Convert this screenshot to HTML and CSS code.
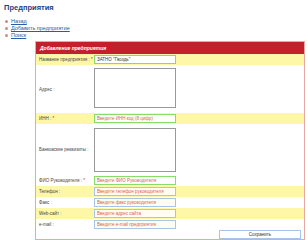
FILE: index.html
```html
<!DOCTYPE html>
<html lang="ru">
<head>
  <meta charset="UTF-8" />
  <title>Предприятия</title>
  <link rel="stylesheet" href="styles.css">
</head>
<body>

  <h1>Предприятия</h1>
  <ul class="menu">
    <li><a href="#">Назад</a></li>
    <li><a href="#">Добавить предприятие</a></li>
    <li><a href="#">Поиск</a></li>
  </ul>

  <div class="box">
    <div class="box-head">Добавление предприятия</div>
    <form>
      <table class="form">
        <tr class="hl">
          <td class="lbl">Название предприятия : <span class="req">*</span></td>
          <td><input type="text" class="ok" value="ЗАТНО &quot;Гвоздь&quot;" /></td>
        </tr>
        <tr>
          <td class="lbl">Адрес :</td>
          <td><textarea></textarea></td>
        </tr>
        <tr class="hl">
          <td class="lbl">ИНН : <span class="req">*</span></td>
          <td><input type="text" class="ok" placeholder="Введите ИНН код (8 цифр)" /></td>
        </tr>
        <tr>
          <td class="lbl">Банковские реквизиты :</td>
          <td><textarea class="tall"></textarea></td>
        </tr>
        <tr>
          <td class="lbl">ФИО Руководителя : <span class="req">*</span></td>
          <td><input type="text" class="ok" placeholder="Введите ФИО Руководителя" /></td>
        </tr>
        <tr class="hl">
          <td class="lbl">Телефон :</td>
          <td><input type="text" placeholder="Введите телефон руководителя" /></td>
        </tr>
        <tr>
          <td class="lbl">Факс :</td>
          <td><input type="text" placeholder="Введите факс руководителя" /></td>
        </tr>
        <tr class="hl">
          <td class="lbl">Web-сайт :</td>
          <td><input type="text" placeholder="Введите адрес сайта" /></td>
        </tr>
        <tr>
          <td class="lbl">e-mail :</td>
          <td><input type="text" placeholder="Введите e-mail предприятия" /></td>
        </tr>
        <tr>
          <td></td>
          <td class="act"><button type="submit">Сохранить</button></td>
        </tr>
      </table>
    </form>
  </div>

</body>
</html>
```

FILE: styles.css
```css
body {
  margin: 0;
  padding: 3px 4px;
  font-family: "Liberation Sans", Arial, sans-serif;
  background: #fff;
}
h1 {
  margin: 0;
  font-size: 7.5px;
  line-height: 10px;
  color: #1d3f7a;
}
.menu {
  list-style: none;
  margin: 5px 0 0;
  padding: 0;
  font-size: 5.5px;
  line-height: 7px;
}
.menu li {
  padding-left: 7px;
  position: relative;
}
.menu li::before {
  content: "";
  position: absolute;
  left: 1px;
  top: 2px;
  width: 3px;
  height: 3px;
  border-radius: 50%;
  background: #c88a8a;
}
.menu a {
  color: #2a5aa8;
}
.box {
  margin: 2px 0 0 31px;
  width: 268px;
  border: 1px solid #e8a8a8;
  font-size: 4.5px;
}
.box-head {
  height: 12px;
  line-height: 12px;
  padding-left: 4px;
  background: #c4202c;
  color: #fff;
  font-weight: bold;
  font-style: italic;
  font-size: 5px;
}
.form {
  width: 100%;
  border-collapse: collapse;
}
.form td {
  padding: 1px 0;
  vertical-align: middle;
}
.form tr.hl td {
  background: #fff7a8;
}
.lbl {
  width: 55px;
  padding-left: 3px !important;
  color: #444;
  white-space: nowrap;
}
.req {
  color: #d02020;
}
input {
  display: block;
  box-sizing: border-box;
  width: 82px;
  height: 9px;
  margin: 0;
  padding: 0 2px;
  font-family: inherit;
  font-size: 4.5px;
  border: 1px solid #a8c4e8;
  background: #fffdf0;
  color: #333;
}
input.ok {
  border: 1px solid #88dd66;
  background: #fff;
}
input::placeholder {
  color: #e06050;
}
textarea {
  display: block;
  box-sizing: border-box;
  width: 82px;
  height: 40px;
  margin: 2px 0 4px;
  border: 1px solid #999;
  resize: none;
  overflow-y: scroll;
}
textarea.tall {
  height: 44px;
  margin: 3px 0 2px;
}
.act {
  text-align: right;
  padding: 0 3px 0 0 !important;
}
button {
  display: inline-block;
  vertical-align: top;
  width: 82px;
  height: 9px;
  padding: 0;
  font-family: inherit;
  font-size: 4.5px;
  border: 1px solid #a8c4e8;
  background: #fff;
  color: #333;
}
```
